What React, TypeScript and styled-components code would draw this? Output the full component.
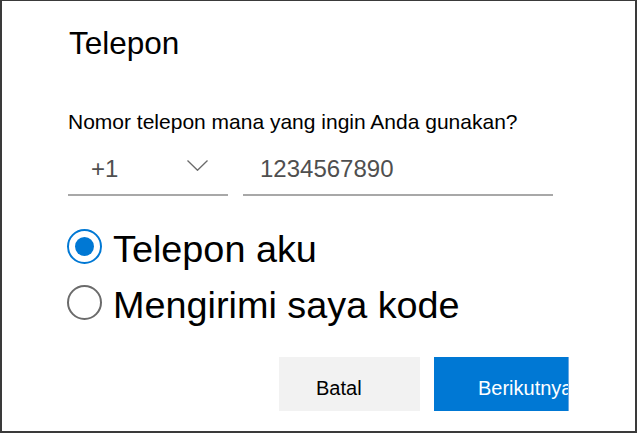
import React, { useState } from "react";
import styled, { createGlobalStyle } from "styled-components";

const GlobalStyle = createGlobalStyle`
  html, body {
    margin: 0;
    padding: 0;
    background: #ffffff;
  }
  body {
    font-family: "Liberation Sans", Arial, sans-serif;
    color: #000000;
  }
`;

const Frame = styled.div`
  box-sizing: border-box;
  width: 637px;
  height: 433px;
  border: 2px solid #3a3a3a;
  border-top-width: 1px;
  padding: 24px 0 0 66px;
  overflow: hidden;
  display: flex;
  flex-direction: column;
`;

const Title = styled.h1`
  margin: 0 0 0 1px;
  font-size: 31.5px;
  line-height: 36px;
  font-weight: 400;
`;

const Question = styled.p`
  margin: 48px 0 0 0;
  font-size: 21px;
  line-height: 26px;
`;

const FieldRow = styled.div`
  display: flex;
  gap: 15px;
  margin-top: 19px;
`;

const Field = styled.div<{ $width: number; $padLeft: number }>`
  box-sizing: border-box;
  width: ${(p) => p.$width}px;
  padding: 0 20px 10px ${(p) => p.$padLeft}px;
  border-bottom: 2px solid #a8a8a8;
  display: flex;
  align-items: center;
  justify-content: space-between;
  font-size: 24px;
  line-height: 30px;
  color: #4f4f4f;
`;

const Chevron = styled.svg`
  width: 21px;
  height: 11px;
  margin-bottom: 7px;
`;

const Options = styled.div`
  display: flex;
  flex-direction: column;
  gap: 12px;
  margin-top: 31px;
`;

const OptionRow = styled.label`
  display: flex;
  align-items: center;
  gap: 11px;
  font-size: 37.8px;
  line-height: 44px;
  cursor: pointer;
`;

const RadioCircle = styled.span<{ $checked: boolean }>`
  box-sizing: border-box;
  width: 35px;
  height: 35px;
  margin-left: -1px;
  margin-bottom: 6px;
  border-radius: 50%;
  border: 2px solid ${(p) => (p.$checked ? "#0078d4" : "#6b6b6b")};
  display: flex;
  align-items: center;
  justify-content: center;
  flex-shrink: 0;

  &::after {
    content: "";
    width: 19px;
    height: 19px;
    border-radius: 50%;
    background: #0078d4;
    display: ${(p) => (p.$checked ? "block" : "none")};
  }
`;

const Actions = styled.div`
  display: flex;
  gap: 14px;
  margin: 30px 0 0 211px;
`;

const Button = styled.button<{ $primary?: boolean; $width: number; $padLeft: number }>`
  box-sizing: border-box;
  width: ${(p) => p.$width}px;
  height: 54px;
  padding: 8px 0 0 ${(p) => p.$padLeft}px;
  border: none;
  border-right: 1px solid ${(p) => (p.$primary ? "#6aa9e3" : "#f2f2f2")};
  background: ${(p) => (p.$primary ? "#0078d4" : "#f2f2f2")};
  color: ${(p) => (p.$primary ? "#ffffff" : "#000000")};
  font-family: "Liberation Sans", Arial, sans-serif;
  font-size: 20px;
  line-height: 46px;
  text-align: left;
  white-space: nowrap;
  overflow: hidden;
  cursor: pointer;
`;

const options = ["Telepon aku", "Mengirimi saya kode"];

export default function App() {
  const [selected, setSelected] = useState(0);

  return (
    <>
      <GlobalStyle />
      <Frame>
        <Title>Telepon</Title>
        <Question>Nomor telepon mana yang ingin Anda gunakan?</Question>
        <FieldRow>
          <Field $width={160} $padLeft={23}>
            <span>+1</span>
            <Chevron viewBox="0 0 21 11" fill="none">
              <path d="M0.5 0.5 L10.5 10.3 L20.5 0.5" stroke="#6b6b6b" strokeWidth="1.3" />
            </Chevron>
          </Field>
          <Field $width={310} $padLeft={17}>
            <span>1234567890</span>
          </Field>
        </FieldRow>
        <Options>
          {options.map((label, i) => (
            <OptionRow key={label} onClick={() => setSelected(i)}>
              <RadioCircle $checked={selected === i} />
              <span>{label}</span>
            </OptionRow>
          ))}
        </Options>
        <Actions>
          <Button $width={141} $padLeft={37}>
            Batal
          </Button>
          <Button $primary $width={135} $padLeft={44}>
            Berikutnya
          </Button>
        </Actions>
      </Frame>
    </>
  );
}
